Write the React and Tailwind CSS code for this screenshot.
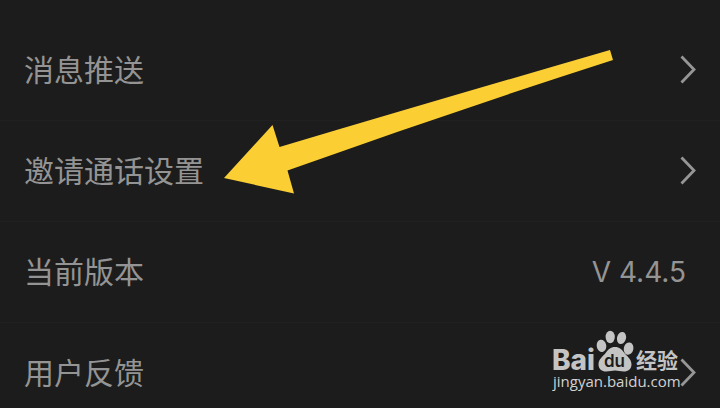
import React from 'react';

const ITEMS = [
  { id: 'push', label: '消息推送' },
  { id: 'call', label: '邀请通话设置' },
  { id: 'version', label: '当前版本', value: 'V 4.4.5' },
  { id: 'feedback', label: '用户反馈' },
];

const ROW = 'flex w-full items-center justify-between h-[101px] pl-6 border-b border-[#202020] text-left';

const Chevron = () => (
  <svg className="w-4 h-8 flex-shrink-0" viewBox="0 0 16 32" fill="none" stroke="#969696" strokeWidth="2.8" aria-hidden="true">
    <path d="M1.5 2.5 L14 15.5 L1.5 28.5" />
  </svg>
);

const SettingRow = ({ label, value }) => {
  const title = <span className="pb-1 text-[30px] leading-10">{label}</span>;

  if (value) {
    return (
      <div className={`${ROW} pr-[34px]`}>
        {title}
        <span className="font-['Inter',sans-serif] text-[28px] leading-10">{value}</span>
      </div>
    );
  }

  return (
    <button type="button" className={`${ROW} pr-6`}>
      {title}
      <Chevron />
    </button>
  );
};

const Arrow = () => (
  <svg className="absolute left-[224px] top-[50px] w-[390px] h-[144px] pointer-events-none" viewBox="224 50 390 144" aria-hidden="true">
    <path
      fill="#fbce34"
      d="M224 178 L272.5 125 L279.5 147 Q448 97 610 50 L613 60 Q448 113 287.5 170.5 L294 193.5 Z"
    />
  </svg>
);

const Watermark = () => (
  <svg
    className="absolute right-9 bottom-3 w-[132px] h-[68px] pointer-events-none"
    viewBox="552 328 132 68"
    role="img"
    aria-label="Baidu 经验"
  >
    <g fill="#c4c4c4">
      <text x="552" y="370" fontFamily="Inter, sans-serif" fontWeight="800" fontSize="28">Bai</text>
      <ellipse cx="601.5" cy="345.8" rx="4.8" ry="6.2" transform="rotate(-10 601.5 345.8)" />
      <ellipse cx="610.2" cy="337" rx="4.6" ry="6.2" />
      <ellipse cx="621.5" cy="338" rx="4.5" ry="6.2" transform="rotate(14 621.5 338)" />
      <ellipse cx="628.6" cy="348.6" rx="4.8" ry="6.2" transform="rotate(12 628.6 348.6)" />
      <path d="M615 347 C619.5 347 622 349.5 624 352.5 C627 356.5 631.5 359 631.5 364.5 C631.5 369 628 371.5 624 371.5 C620 371.5 618 370.5 615 370.5 C612 370.5 610 371.5 606 371.5 C602 371.5 598.5 369 598.5 364.5 C598.5 359 603 356.5 606 352.5 C608 349.5 610.5 347 615 347 Z" />
      <text x="636" y="368" fontFamily="'Noto Sans CJK SC', sans-serif" fontWeight="700" fontSize="21">经验</text>
    </g>
    <text x="604" y="367" fill="#1c1c1c" fontFamily="Inter, sans-serif" fontWeight="600" fontSize="17">du</text>
    <text x="553" y="387" fill="#d2d2d2" fontFamily="'Open Sans', sans-serif" fontWeight="500" fontSize="15">jingyan.baidu.com</text>
  </svg>
);

export default function App() {
  return (
    <main className="relative h-screen overflow-hidden bg-[#1c1c1c] pt-5 text-[#949494] font-['Noto_Sans_CJK_SC',sans-serif]">
      {ITEMS.map((item) => (
        <SettingRow key={item.id} label={item.label} value={item.value} />
      ))}
      <Arrow />
      <Watermark />
    </main>
  );
}
